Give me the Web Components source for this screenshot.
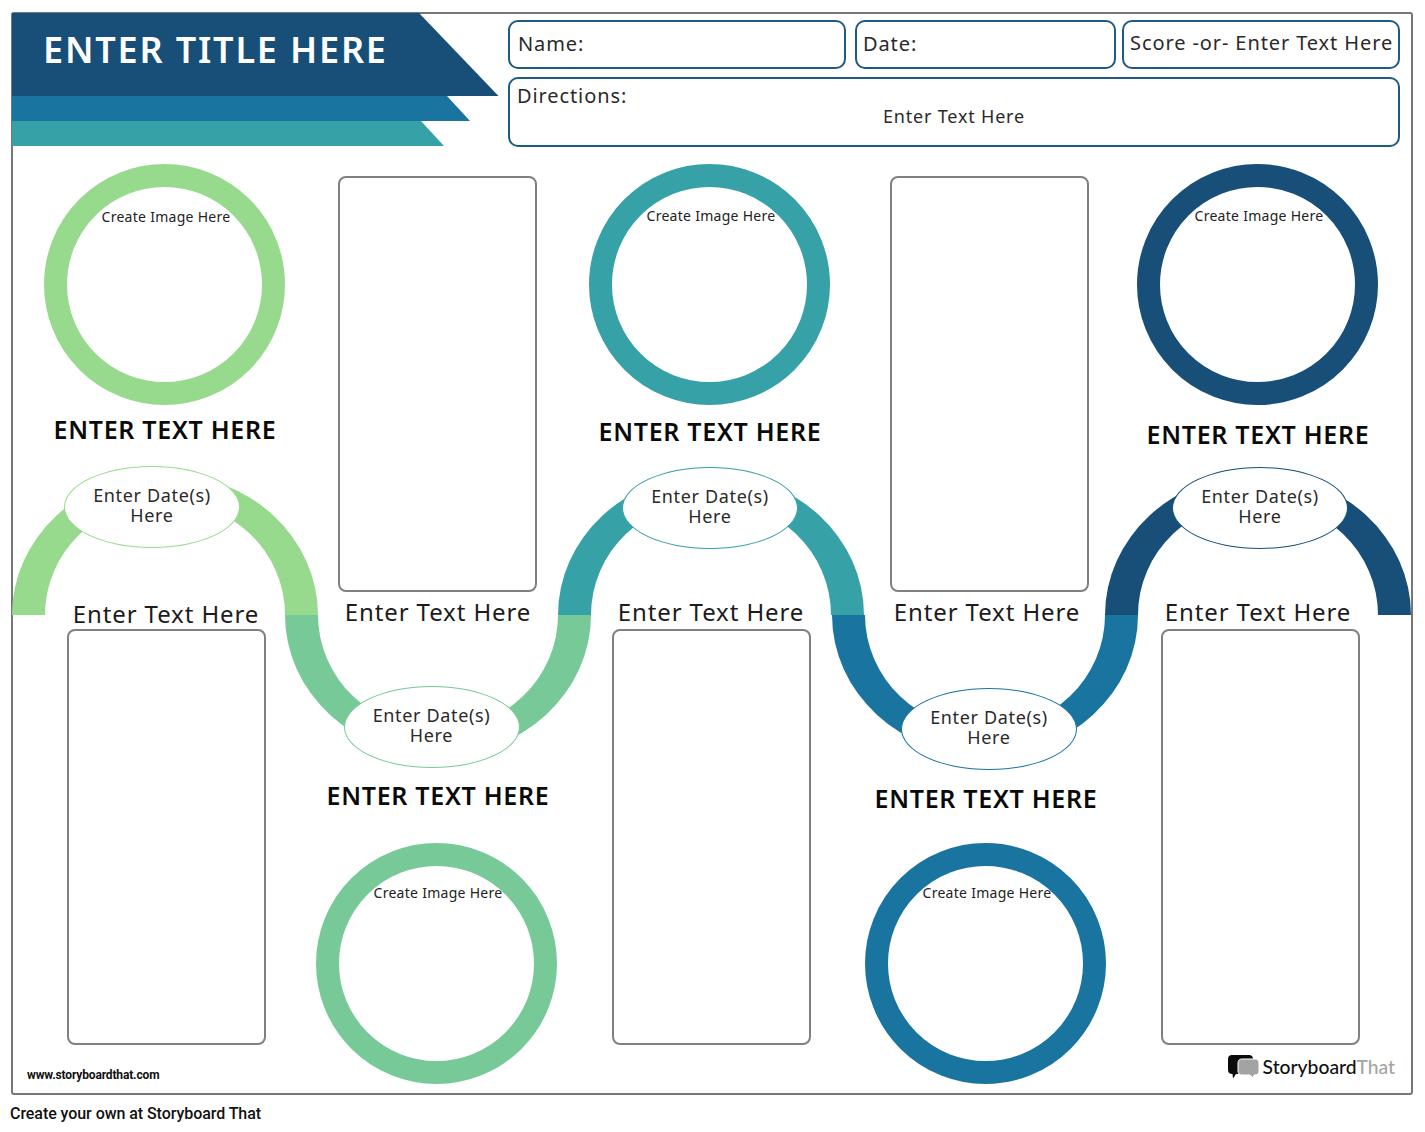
<!DOCTYPE html>
<html lang="en">
  <head>
    <meta charset="UTF-8" />
    <title>Timeline Worksheet</title>
    <style>
      body {
        margin: 0;
        background: #fff;
        color: #222;
        font-family: "Noto Sans", sans-serif;
      }
    </style>
  </head>
  <body>
    <template id="field-template">
      <style>
        :host {
          display: block;
          box-sizing: border-box;
          height: 49px;
          padding: 9px 0 0 8px;
          border: 2px solid #1f5a80;
          border-radius: 10px;
          font: 20px/26px "Noto Sans", sans-serif;
          letter-spacing: 0.9px;
          color: #2a2a2a;
          white-space: nowrap;
        }
      </style>
      <slot></slot>
    </template>

    <template id="ring-template">
      <style>
        :host {
          display: block;
          box-sizing: border-box;
          width: 241px;
          height: 241px;
          flex: none;
          border: 23px solid var(--ring, #000);
          border-radius: 50%;
          background: #fff;
          text-align: center;
          font: 14px/18px "Noto Sans", sans-serif;
          letter-spacing: 0.28px;
          color: #222;
          white-space: nowrap;
        }
        div { padding: var(--text-top, 20px) 0 0 4px; }
      </style>
      <div><slot>Create Image Here</slot></div>
    </template>

    <template id="heading-template">
      <style>
        :host {
          display: block;
          flex: none;
          font: 600 25px/30px "Noto Sans", sans-serif;
          letter-spacing: 0.7px;
          color: #0a0a0a;
          white-space: nowrap;
        }
      </style>
      <slot></slot>
    </template>

    <template id="label-template">
      <style>
        :host {
          display: block;
          flex: none;
          margin-left: 2px;
          font: 24px/30px "Noto Sans", sans-serif;
          letter-spacing: 0.9px;
          color: #1c1c1c;
          white-space: nowrap;
        }
      </style>
      <slot></slot>
    </template>

    <template id="date-template">
      <style>
        :host {
          display: flex;
          flex: none;
          box-sizing: border-box;
          width: 176px;
          height: 82px;
          padding-bottom: 5px;
          align-items: center;
          justify-content: center;
          text-align: center;
          border: 1px solid var(--pill, #000);
          border-radius: 50%;
          background: #fff;
          font: 18px/20px "Noto Sans", sans-serif;
          letter-spacing: 0.65px;
          color: #2a2a2a;
        }
      </style>
      <div><slot></slot></div>
    </template>

    <template id="box-template">
      <style>
        :host {
          display: block;
          flex: none;
          box-sizing: border-box;
          width: 199px;
          height: 416px;
          border: 2px solid #808080;
          border-radius: 8px;
          background: #fff;
        }
      </style>
    </template>

    <template id="column-template">
      <style>
        :host {
          display: flex;
          flex-direction: column;
          align-items: center;
          min-width: 0;
        }
      </style>
      <slot></slot>
    </template>

    <template id="banner-template">
      <style>
        :host {
          display: block;
          position: relative;
          flex: none;
          width: 487px;
          height: 134px;
          margin: -1px 0 0 -1px;
        }
        svg { display: block; }
        h1 {
          position: absolute;
          left: 31px;
          top: 14px;
          margin: 0;
          font: 600 36px/46px "Noto Sans", sans-serif;
          letter-spacing: 1.82px;
          color: #fff;
          white-space: nowrap;
        }
      </style>
      <svg width="487" height="134" viewBox="12 13 487 134">
        <polygon points="12,13 419,13 498.500,96 12,96" fill="#174f78" />
        <polygon points="12,96 447,96 470,121 12,121" fill="#1a74a0" />
        <polygon points="12,121 421,121 444,146 12,146" fill="#36a2a8" />
      </svg>
      <h1><slot></slot></h1>
    </template>

    <template id="arcs-template">
      <style>
        :host {
          display: block;
          position: absolute;
          inset: 0;
        }
        svg { display: block; overflow: visible; }
      </style>
      <svg width="1398" height="1079" viewBox="13 14 1398 1079"></svg>
    </template>

    <template id="logo-template">
      <style>
        :host {
          display: flex;
          position: absolute;
          right: 16px;
          bottom: 14px;
          align-items: center;
          gap: 4px;
          font: 500 19.300px/24px Lato, sans-serif;
          color: #111;
          white-space: nowrap;
        }
        span { color: #a3a3a3; }
        svg { display: block; }
      </style>
      <svg width="31" height="24" viewBox="0 0 31 24">
        <path d="M4 0h17c2.500 0 4 1.500 4 4v11c0 2.500-1.500 4-4 4H8l-3 4.500-0.500-4.500C1.500 19 0 17.500 0 15V4c0-2.500 1.500-4 4-4z" fill="#0b0b0b" />
        <path d="M14 4h13c2.500 0 4 1.500 4 4v8c0 2.500-1.500 4-4 4h-1l-1 3-3-3h-8c-2.500 0-4-1.500-4-4V8c0-2.500 1.500-4 4-4z" fill="#a3a3a3" stroke="#fff" stroke-width="1" />
      </svg>
      <div><slot></slot><span>That</span></div>
    </template>

    <template id="url-template">
      <style>
        :host {
          display: block;
          position: absolute;
          left: 14px;
          bottom: 10px;
          font: 700 12px/16px Roboto, sans-serif;
          letter-spacing: -0.15px;
          color: #111;
        }
      </style>
      <slot></slot>
    </template>

    <template id="sheet-template">
      <style>
        :host {
          display: block;
          position: relative;
          box-sizing: border-box;
          width: 1402px;
          height: 1083px;
          margin: 12px 0 0 11px;
          border: 2px solid #777;
          border-radius: 3px;
        }
        header {
          display: flex;
          height: 133px;
        }
        .fields {
          display: grid;
          grid-template-columns: 338px 264px 278px;
          column-gap: 6px;
          row-gap: 8px;
          grid-template-rows: 49px 70px;
          margin: 6px 0 0 9px;
        }
        .fields ::slotted(.wide) {
          grid-column: 1 / -1;
        }
        main {
          position: relative;
          display: grid;
          grid-template-columns: 272px 272px 274px 278px 266px;
          padding-left: 16px;
        }
      </style>
      <header>
        <slot name="banner"></slot>
        <div class="fields"><slot name="field"></slot></div>
      </header>
      <slot name="arcs"></slot>
      <main><slot></slot></main>
      <slot name="foot"></slot>
    </template>

    <template id="directions-template">
      <style>
        :host {
          display: block;
          box-sizing: border-box;
          height: 70px;
          padding: 4px 0 0 7px;
          border: 2px solid #1f5a80;
          border-radius: 10px;
          color: #2a2a2a;
          white-space: nowrap;
        }
        .head { font: 20px/26px "Noto Sans", sans-serif; letter-spacing: 0.9px; }
        .body {
          margin-top: -4px;
          font: 18px/22px "Noto Sans", sans-serif;
          letter-spacing: 0.8px;
          text-align: center;
          padding-right: 7px;
        }
      </style>
      <div class="head"><slot name="head"></slot></div>
      <div class="body"><slot></slot></div>
    </template>

    <tl-sheet>
      <tl-banner slot="banner">ENTER TITLE HERE</tl-banner>
      <tl-field slot="field">Name:</tl-field>
      <tl-field slot="field" style="margin-left: 3px; padding-left: 6px">Date:</tl-field>
      <tl-field slot="field" style="padding: 8px 0 0 6px">Score -or- Enter Text Here</tl-field>
      <tl-directions slot="field" class="wide"><span slot="head">Directions:</span>Enter Text Here</tl-directions>

      <tl-arcs slot="arcs"></tl-arcs>

      <tl-column>
        <tl-ring style="margin: 17px 2px 0 0; --ring: #98da8d; --text-top: 21px"></tl-ring>
        <tl-heading style="margin-top: 9px">ENTER TEXT HERE</tl-heading>
        <tl-date style="margin: 22px 26px 0 0; --pill: #98da8d">Enter Date(s)<br />Here</tl-date>
        <tl-label style="margin-top: 51px">Enter Text Here</tl-label>
        <tl-box style="margin-left: 2px"></tl-box>
      </tl-column>

      <tl-column>
        <tl-box style="margin-top: 29px"></tl-box>
        <tl-label style="margin-top: 5px">Enter Text Here</tl-label>
        <tl-date style="margin: 59px 11px 0 0; --pill: #78c998">Enter Date(s)<br />Here</tl-date>
        <tl-heading style="margin: 12px 0 0 2px">ENTER TEXT HERE</tl-heading>
        <tl-ring style="margin: 33px 2px 0 0; --ring: #78c998; --text-top: 18px"></tl-ring>
      </tl-column>

      <tl-column>
        <tl-ring style="margin: 17px 2px 0 0; --ring: #36a2a8; --text-top: 20px"></tl-ring>
        <tl-heading style="margin-top: 11px">ENTER TEXT HERE</tl-heading>
        <tl-date style="margin-top: 21px; --pill: #36a2a8">Enter Date(s)<br />Here</tl-date>
        <tl-label style="margin-top: 48px">Enter Text Here</tl-label>
        <tl-box style="margin: 2px 0 0 2px"></tl-box>
      </tl-column>

      <tl-column>
        <tl-box style="margin: 29px 0 0 6px"></tl-box>
        <tl-label style="margin-top: 5px">Enter Text Here</tl-label>
        <tl-date style="margin: 61px 0 0 6px; --pill: #1a74a0">Enter Date(s)<br />Here</tl-date>
        <tl-heading style="margin-top: 13px">ENTER TEXT HERE</tl-heading>
        <tl-ring style="margin: 30px 2px 0 0; --ring: #1a74a0; --text-top: 18px"></tl-ring>
      </tl-column>

      <tl-column>
        <tl-ring style="margin: 17px 2px 0 0; --ring: #174f78; --text-top: 20px"></tl-ring>
        <tl-heading style="margin-top: 14px">ENTER TEXT HERE</tl-heading>
        <tl-date style="margin: 18px 0 0 4px; --pill: #174f78">Enter Date(s)<br />Here</tl-date>
        <tl-label style="margin: 48px 0 0 0">Enter Text Here</tl-label>
        <tl-box style="margin: 2px 0 0 4px"></tl-box>
      </tl-column>

      <tl-url slot="foot">www.storyboardthat.com</tl-url>
      <tl-logo slot="foot">Storyboard</tl-logo>
    </tl-sheet>
    <tl-caption>Create your own at Storyboard That</tl-caption>

    <script type="module">
      const NS = "http://www.w3.org/2000/svg";

      // one template per element, the id is the tag without its prefix
      const define = (name, extra) => {
        class Element extends HTMLElement {
          constructor() {
            super();
            this.attachShadow({ mode: "open" });
            const tmp = document.getElementById(name + "-template");
            this.shadowRoot.appendChild(tmp.content.cloneNode(true));
            if (extra) extra(this.shadowRoot);
          }
        }
        customElements.define("tl-" + name, Element);
      };

      const drawArcs = (root) => {
        const svg = root.querySelector("svg");
        const arcs = [
          { cx: 165, color: "#98da8d", up: true },
          { cx: 438, color: "#78c998", up: false },
          { cx: 711, color: "#36a2a8", up: true },
          { cx: 985, color: "#1a74a0", up: false },
          { cx: 1258, color: "#174f78", up: true },
        ];
        for (const { cx, color, up } of arcs) {
          const y = 615;
          const a = up ? 1 : 0;
          const b = up ? 0 : 1;
          const path = document.createElementNS(NS, "path");
          path.setAttribute(
            "d",
            `M${cx - 153} ${y}A153 141 0 0 ${a} ${cx + 153} ${y}` +
              `L${cx + 120} ${y}A120 115 0 0 ${b} ${cx - 120} ${y}Z`
          );
          path.setAttribute("fill", color);
          svg.appendChild(path);
        }
      };

      ["sheet", "banner", "field", "directions", "column", "ring", "heading", "label", "date", "box", "url", "logo"].forEach((n) => define(n));
      define("arcs", drawArcs);

      customElements.define(
        "tl-caption",
        class extends HTMLElement {
          constructor() {
            super();
            this.attachShadow({ mode: "open" });
            this.shadowRoot.innerHTML = `
              <style>
                :host {
                  display: block;
                  margin: 9px 0 0 10px;
                  font: 500 16px/20px Roboto, sans-serif;
                  letter-spacing: -0.06px;
                  color: #111;
                }
              </style>
              <slot></slot>`;
          }
        }
      );
    </script>
  </body>
</html>
